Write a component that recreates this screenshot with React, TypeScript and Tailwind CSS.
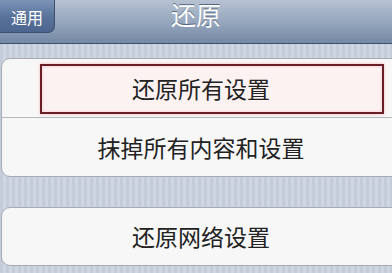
import React from "react";

const cjk = { fontFamily: '"Noto Sans CJK SC", "Noto Sans", sans-serif' };

export default function App() {
  return (
    <div
      className="w-[392px] h-[273px] overflow-hidden flex flex-col bg-[repeating-linear-gradient(90deg,#c5ccd9_0px,#c5ccd9_3px,#d0d6e1_3px,#d0d6e1_6px)]"
      style={cjk}
    >
      <div className="h-[44px] shrink-0 grid grid-cols-[1fr_auto_1fr] items-start bg-[linear-gradient(180deg,#b7c2d2_0%,#97a7bd_50%,#7489a6_100%)] border-b border-[#3f506b]">
        <div className="flex">
          <div className="w-[55px] h-[33px] rounded-br-[7px] bg-[linear-gradient(180deg,#7d94b6_0%,#5a749c_50%,#4b658e_100%)] border-r border-b border-[#3d5070] flex items-center justify-center pt-[1px] text-white text-[16px] leading-none">
            通用
          </div>
        </div>
        <div className="text-white text-[25px] leading-none pt-[2px] [text-shadow:0_-1px_0_#55677f]">还原</div>
        <div />
      </div>

      <div className="mt-[14px] ml-[1px] w-[400px] shrink-0 rounded-[9px] border border-[#a7abb3] bg-[#f7f7f7] flex flex-col">
        <div className="relative h-[59px] flex items-center justify-center border-b border-[#b3b6bc] text-[#222] text-[23px] leading-none">
          <div className="absolute left-[38px] top-[5px] w-[344px] h-[50px] border-2 border-[#6a1e25] bg-[#fdf2f2] shadow-[0_0_3px_#f3b5b8,inset_0_0_3px_#f3c2c4]" />
          <span className="relative">还原所有设置</span>
        </div>
        <div className="h-[58px] flex items-center justify-center text-[#222] text-[23px] leading-none">
          抹掉所有内容和设置
        </div>
      </div>

      <div className="mt-[30px] ml-[1px] w-[400px] h-[59px] shrink-0 rounded-[9px] border border-[#a7abb3] bg-[#f7f7f7] flex items-center justify-center text-[#222] text-[23px] leading-none">
        还原网络设置
      </div>
    </div>
  );
}
